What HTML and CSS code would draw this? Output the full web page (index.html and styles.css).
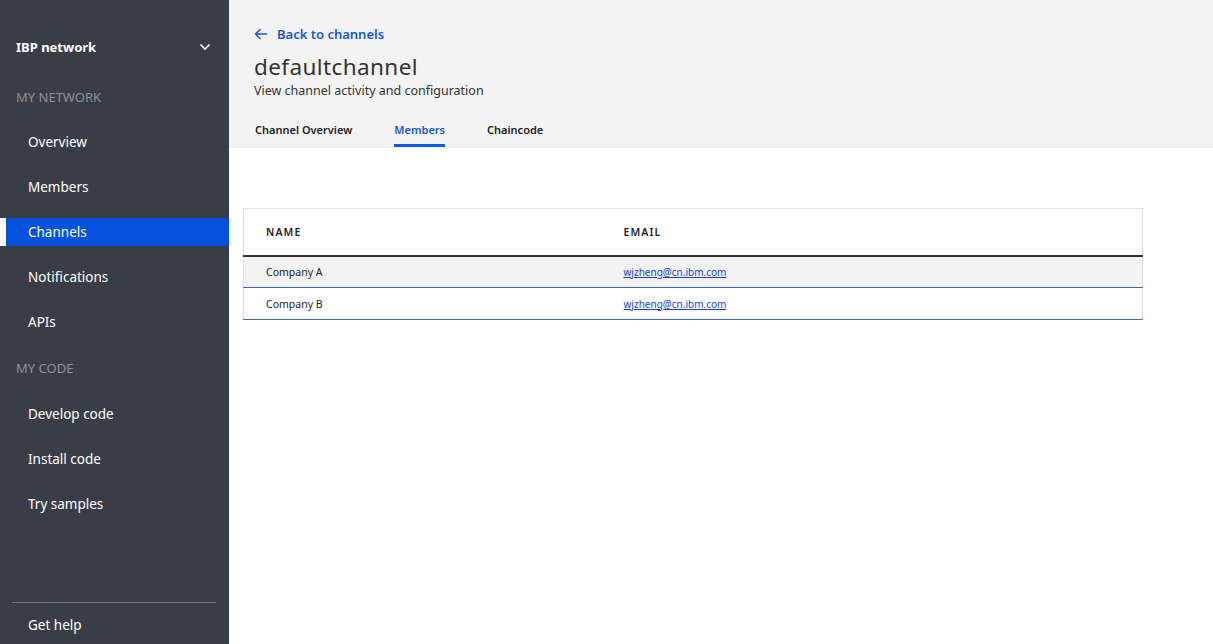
FILE: index.html
```html
<!DOCTYPE html>
<html>
<head>
<meta charset="utf-8">
<link rel="stylesheet" href="styles.css">
</head>
<body>
<div class="app">
  <aside class="sidebar">
    <div class="brand">
      <span>IBP network</span>
      <svg class="chev" width="12" height="8" viewBox="0 0 12 8"><path d="M1.5 1.5 L6 6 L10.5 1.5" fill="none" stroke="#fff" stroke-width="1.6"/></svg>
    </div>
    <div class="section">MY NETWORK</div>
    <nav class="nav">
      <div class="item">Overview</div>
      <div class="item">Members</div>
      <div class="item active">Channels</div>
      <div class="item">Notifications</div>
      <div class="item">APIs</div>
    </nav>
    <div class="section code">MY CODE</div>
    <nav class="nav nav-code">
      <div class="item">Develop code</div>
      <div class="item">Install code</div>
      <div class="item">Try samples</div>
    </nav>
    <div class="spacer"></div>
    <div class="foot">
      <div class="item help">Get help</div>
    </div>
  </aside>
  <main class="main">
    <header class="head">
      <a class="back">
        <svg width="14" height="12" viewBox="0 0 14 12"><path d="M13 6 H1.5 M6.5 1 L1.5 6 L6.5 11" fill="none" stroke="#1a56db" stroke-width="1.5"/></svg>
        <span>Back to channels</span>
      </a>
      <h1 class="title">defaultchannel</h1>
      <p class="sub">View channel activity and configuration</p>
      <div class="tabs">
        <div class="tab">Channel Overview</div>
        <div class="tab selected">Members</div>
        <div class="tab">Chaincode</div>
      </div>
    </header>
    <section class="content">
      <table class="tbl">
        <thead>
          <tr><th class="c1">NAME</th><th>EMAIL</th></tr>
        </thead>
        <tbody>
          <tr class="alt"><td>Company A</td><td><a class="mail">wjzheng@cn.ibm.com</a></td></tr>
          <tr><td>Company B</td><td><a class="mail">wjzheng@cn.ibm.com</a></td></tr>
        </tbody>
      </table>
    </section>
  </main>
</div>
</body>
</html>
```
FILE: styles.css
```css
* { box-sizing: border-box; }
html, body { margin: 0; padding: 0; height: 100%; }
body {
  font-family: "Noto Sans", "Open Sans", "Liberation Sans", sans-serif;
  background: #fff;
  overflow: hidden;
}
.app { display: flex; height: 644px; }
.sidebar {
  width: 229px;
  flex: none;
  background: #393d45;
  color: #fff;
  display: flex;
  flex-direction: column;
}
.brand {
  display: flex;
  align-items: center;
  justify-content: space-between;
  padding: 0 18px 0 16px;
  margin-top: 37px;
  height: 20px;
  font-size: 13px;
  font-weight: 700;
}
.section {
  font-size: 13px;
  color: #8e9197;
  padding-left: 16px;
  margin-top: 30px;
  height: 20px;
  line-height: 20px;
}
.section.code { margin-top: 22px; }
.nav {
  display: flex;
  flex-direction: column;
  gap: 17px;
  margin-top: 21px;
}
.nav.nav-code { margin-top: 22px; }
.item {
  height: 28px;
  line-height: 28px;
  padding-left: 28px;
  font-size: 13.5px;
  color: #fff;
}
.item.active {
  background: #0550dc;
  border-left: 6px solid #fff;
  padding-left: 22px;
}
.spacer { flex: 1; }
.foot {
  margin: 0 13px 0 12px;
  border-top: 1px solid #6f7278;
  padding-top: 8px;
  padding-bottom: 5px;
}
.foot .item { padding-left: 16px; }
.main { flex: 1; display: flex; flex-direction: column; min-width: 0; }
.head {
  background: #f3f3f3;
  height: 148px;
  padding: 24px 0 0 25px;
}
.back {
  display: flex;
  align-items: center;
  gap: 9px;
  color: #1a56db;
  font-size: 13px;
  font-weight: 600;
  height: 20px;
}
.title {
  margin: 8px 0 0;
  font-size: 22.5px;
  font-weight: 400;
  color: #333;
  line-height: 30px;
  letter-spacing: 0.4px;
}
.sub {
  margin: 0;
  font-size: 12.5px;
  color: #333;
  line-height: 18px;
}
.tabs {
  display: flex;
  gap: 42px;
  margin-top: 19px;
  padding-left: 1px;
}
.tab {
  font-size: 11px;
  font-weight: 600;
  color: #222;
  height: 28px;
  line-height: 22px;
}
.tab.selected {
  color: #1a56db;
  border-bottom: 3px solid #0f5be5;
}
.content { padding: 60px 70px 0 14px; }
.tbl {
  width: 900px;
  border-collapse: collapse;
  border: 1px solid #dfe3e6;
  font-size: 10.5px;
  color: #222;
}
.tbl th {
  text-align: left;
  font-size: 10.5px;
  font-weight: 600;
  letter-spacing: 1.1px;
  height: 47px;
  padding: 0 0 0 22px;
  border-bottom: 2px solid #333;
  color: #222;
}
.tbl th.c1 { width: 358px; }
.tbl td {
  height: 32px;
  padding: 0 0 0 22px;
  border-bottom: 1px solid #3f6aa6;
}
.tbl tr.alt td { background: #f2f2f2; }
.mail { color: #1a3fcc; text-decoration: underline; font-size: 10px; }
```
